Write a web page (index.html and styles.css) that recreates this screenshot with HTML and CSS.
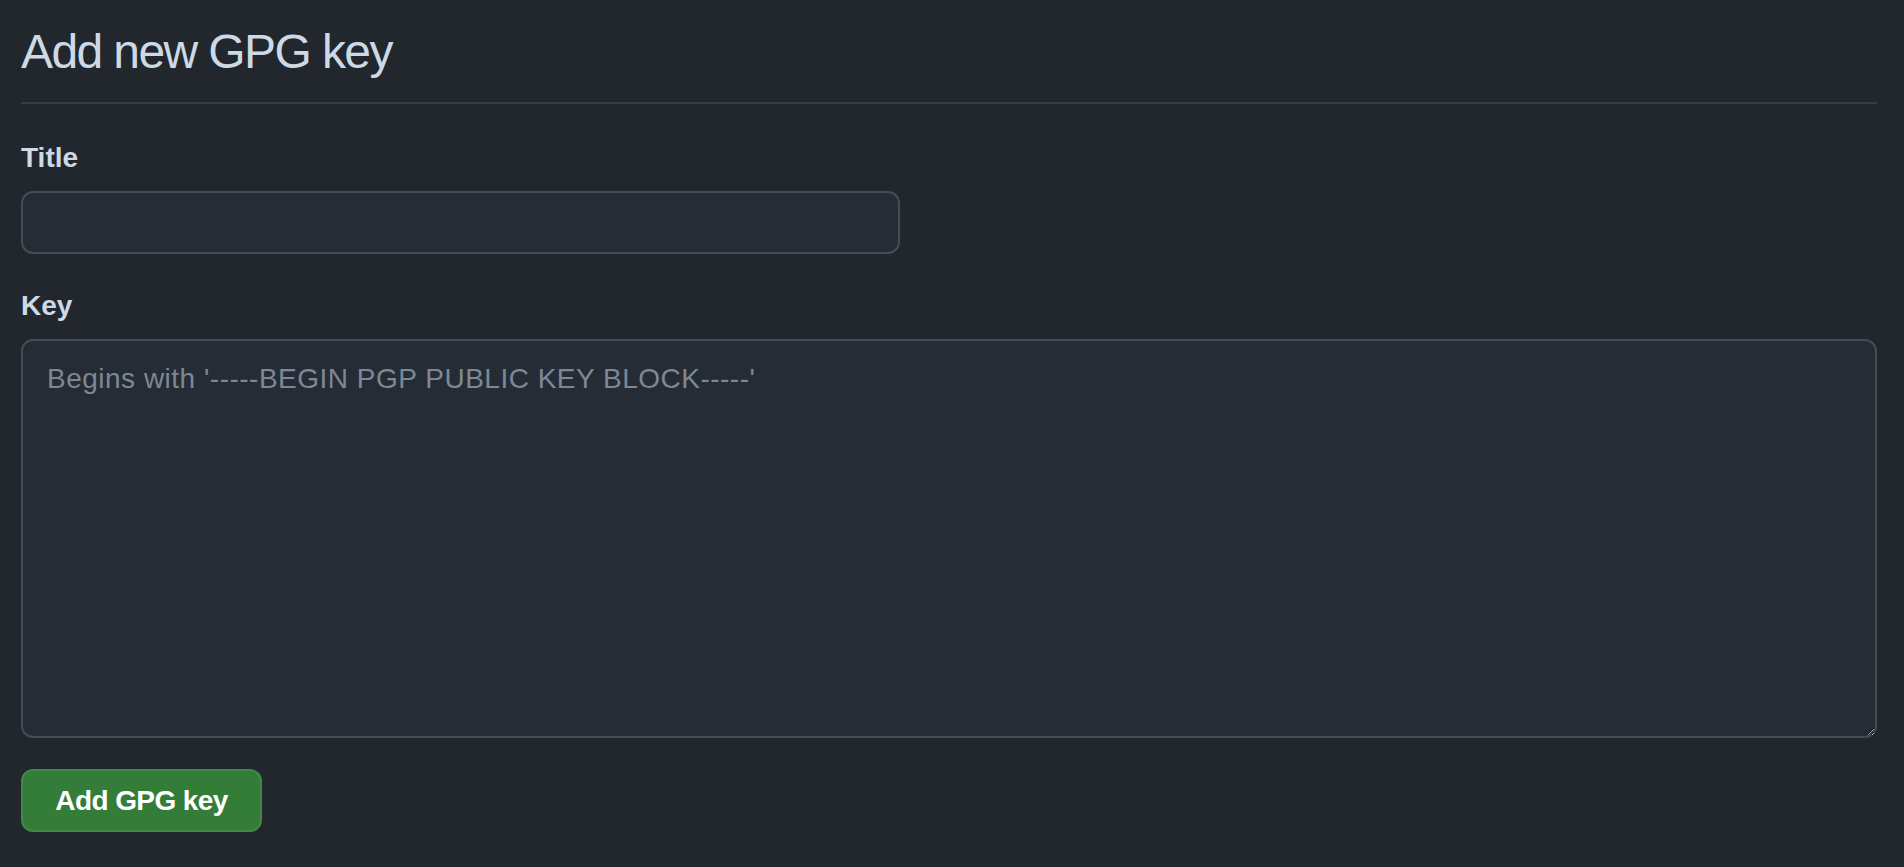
FILE: index.html
```html
<!DOCTYPE html>
<html lang="en">
<head>
<meta charset="utf-8">
<title>Add new GPG key</title>
<link rel="stylesheet" href="styles.css">
</head>
<body>
<main class="page">
  <div class="subhead">
    <h2 class="subhead-heading">Add new GPG key</h2>
  </div>
  <form class="gpg-form" onsubmit="return false;">
    <div class="form-group">
      <label class="form-label" for="title">Title</label>
      <input class="form-input" id="title" type="text">
    </div>
    <div class="form-group">
      <label class="form-label" for="key">Key</label>
      <textarea class="form-textarea" id="key" placeholder="Begins with '-----BEGIN PGP PUBLIC KEY BLOCK-----'"></textarea>
    </div>
    <button class="btn-primary" type="submit">Add GPG key</button>
  </form>
</main>
</body>
</html>
```

FILE: styles.css
```css
html, body {
  margin: 0;
  padding: 0;
  background: #22272e;
}

body {
  font-family: "Liberation Sans", Arial, sans-serif;
  color: #cdd9e5;
  height: 867px;
  overflow: hidden;
}

.page {
  padding: 0 27px 0 21px;
}

.subhead {
  padding-top: 16px;
  padding-bottom: 14px;
  border-bottom: 2px solid #373e47;
}

.subhead-heading {
  margin: 0;
  font-size: 48px;
  font-weight: 400;
  line-height: 72px;
  letter-spacing: -1.6px;
  color: #cdd9e5;
}

.gpg-form {
  padding-top: 33px;
  display: flex;
  flex-direction: column;
  align-items: flex-start;
}

.form-group {
  display: flex;
  flex-direction: column;
  align-items: stretch;
  margin-bottom: 31px;
  width: 100%;
}

.form-label {
  font-size: 28px;
  font-weight: 700;
  line-height: 42px;
  margin-bottom: 12px;
  color: #cdd9e5;
}

.form-input,
.form-textarea {
  box-sizing: border-box;
  background: #262c36;
  border: 2px solid #444c56;
  border-radius: 12px;
  color: #adbac7;
  font-family: "Liberation Sans", Arial, sans-serif;
  font-size: 28px;
  outline: none;
}

.form-input {
  width: 879px;
  height: 63px;
  padding: 10px 24px;
}

.form-textarea {
  width: 100%;
  height: 399px;
  padding: 18px 24px 14px;
  line-height: 40px;
  letter-spacing: 0.5px;
  resize: vertical;
}

.form-textarea::placeholder {
  color: #7d8894;
}

.btn-primary {
  box-sizing: border-box;
  width: 241px;
  height: 63px;
  margin-top: 0;
  background: #347d39;
  border: 2px solid rgba(205, 217, 229, 0.1);
  border-radius: 12px;
  color: #ffffff;
  font-family: "Liberation Sans", Arial, sans-serif;
  font-size: 28px;
  font-weight: 700;
  letter-spacing: -0.6px;
  cursor: pointer;
}
```
